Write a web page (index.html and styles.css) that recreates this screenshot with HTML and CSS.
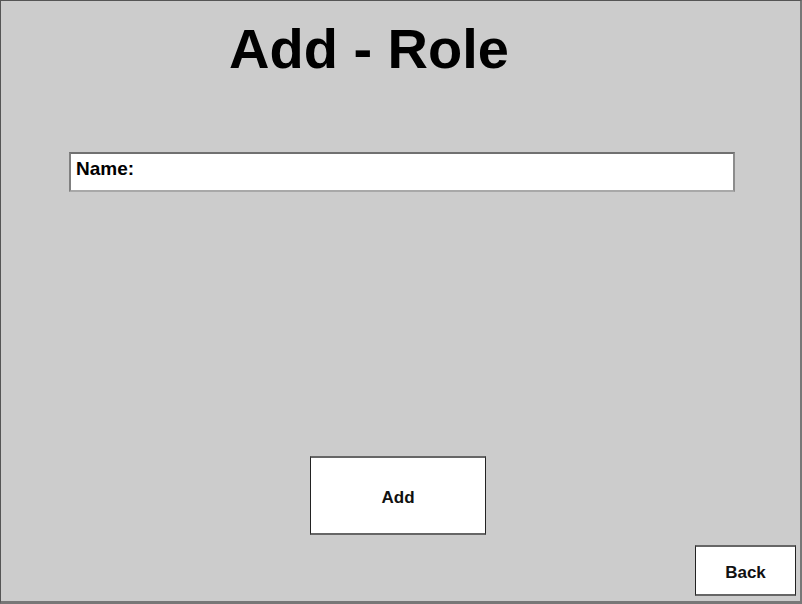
FILE: index.html
```html
<!DOCTYPE html>
<html>
<head>
<meta charset="utf-8">
<title>Add - Role</title>
<link rel="stylesheet" href="styles.css">
</head>
<body>
<div class="page">
  <h1 class="title">Add - Role</h1>
  <div class="field"><span class="label">Name:</span></div>
  <button class="btn btn-add">Add</button>
  <button class="btn btn-back">Back</button>
</div>
</body>
</html>
```
FILE: styles.css
```css
html, body {
  margin: 0;
  padding: 0;
  background: #cccccc;
}
* { box-sizing: border-box; }
.page {
  width: 802px;
  height: 604px;
  background: #cccccc;
  border-top: 1px solid #555555;
  border-left: 1px solid #555555;
  border-right: 2px solid #777777;
  border-bottom: 3px solid #777777;
  display: flex;
  flex-direction: column;
  font-family: "Liberation Sans", Arial, sans-serif;
  color: #000;
}
.title {
  margin: 16px 0 0 0;
  padding-left: 228px;
  font-size: 56px;
  font-weight: bold;
  line-height: 64px;
  height: 64px;
}
.field {
  margin: 71px 0 0 68px;
  width: 666px;
  height: 40px;
  background: #ffffff;
  border-top: 2px solid #707070;
  border-left: 2px solid #808080;
  border-right: 2px solid #8c8c8c;
  border-bottom: 2px solid #a8a8a8;
  padding: 4px 5px;
}
.label {
  display: block;
  font-size: 19px;
  font-weight: bold;
  line-height: 22px;
}
.btn {
  font-family: "Liberation Sans", Arial, sans-serif;
  font-weight: bold;
  font-size: 17px;
  color: #111;
  background: #ffffff;
  border: 1px solid #222222;
  border-top: 2px solid #666666;
  border-bottom: 2px solid #666666;
  padding: 5px 0 0 0;
  display: flex;
  align-items: center;
  justify-content: center;
}
.btn-add {
  margin: 264px 0 0 309px;
  width: 176px;
  height: 79px;
}
.btn-back {
  align-self: flex-end;
  margin: 10px 4px 0 0;
  width: 101px;
  height: 51px;
}
```
